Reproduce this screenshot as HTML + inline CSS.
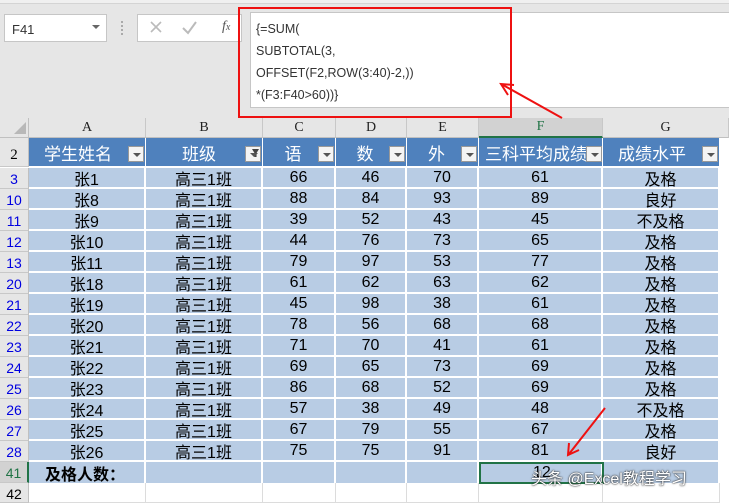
<!DOCTYPE html>
<html><head><meta charset="utf-8"><style>
*{margin:0;padding:0;box-sizing:border-box}
body{width:729px;height:503px;overflow:hidden;background:#fff;position:relative;font-family:"Liberation Sans","Noto Sans CJK SC",sans-serif}
.a{position:absolute}
.c{position:absolute;display:flex;align-items:center;justify-content:center;font-size:16px;color:#000;font-family:"Liberation Sans","Noto Sans CJK SC",sans-serif}
.rh{position:absolute;left:0;width:29px;background:#e6e6e6;border-bottom:1px solid #c8c8c8;border-right:1px solid #c0c0c0;color:#0000e0;font-size:14px;font-family:"Liberation Sans",sans-serif;display:flex;align-items:center;justify-content:center;padding-top:2px}
.ch{position:absolute;top:118px;height:20px;background:#e6e6e6;border-right:1px solid #c8c8c8;border-bottom:1px solid #c0c0c0;font-family:"Liberation Serif",serif;font-size:14px;display:flex;align-items:center;justify-content:center;color:#222}
.hd{position:absolute;top:138px;height:28px;background:#4f81bd;color:#fff;font-size:17px;font-family:"Liberation Sans","Noto Sans CJK SC",sans-serif;display:flex;align-items:center;justify-content:center;border-right:1px solid #fff}
.dd{position:absolute;width:16px;height:16px;background:#f4f4f4;border:1px solid #999;top:146px}
.dd:after{content:"";position:absolute;left:4px;top:6px;border-left:4px solid transparent;border-right:4px solid transparent;border-top:4px solid #555}
</style></head><body>
<div class="a" style="left:0;top:0;width:729px;height:118px;background:#e6e6e6"></div>
<div class="a" style="left:0;top:0;width:729px;height:4px;background:#f0f0f0;border-bottom:1px solid #d4d4d4"></div>
<div class="a" style="left:4px;top:14px;width:103px;height:28px;background:#fff;border:1px solid #c6c6c6;font-size:13px;color:#333;padding:7px 0 0 7px">F41</div>
<div class="a" style="left:92px;top:25px;border-left:4px solid transparent;border-right:4px solid transparent;border-top:4px solid #666"></div>
<div class="a" style="left:121px;top:21px;width:2px;height:14px;border-left:2px dotted #aaa"></div>
<div class="a" style="left:137px;top:14px;width:105px;height:28px;background:#fff;border:1px solid #c6c6c6"></div>
<svg class="a" style="left:137px;top:14px" width="105" height="28"><path d="M14 8 L24 18 M24 8 L14 18" stroke="#bbb" stroke-width="1.6"/><path d="M46 14 L51 19 L59 8" stroke="#bbb" stroke-width="2" fill="none"/></svg>
<div class="a" style="left:222px;top:19px;font-size:14px;color:#555;font-style:italic;font-family:'Liberation Serif',serif">f<span style="font-size:10px">x</span></div>
<div class="a" style="left:250px;top:12px;width:479px;height:96px;background:#fff;border:1px solid #c6c6c6;border-right:none"></div>
<div class="a" style="left:256px;top:18px;font-size:12.5px;line-height:22px;color:#333">{=SUM(<br>SUBTOTAL(3,<br>OFFSET(F2,ROW(3:40)-2,))<br>*(F3:F40&gt;60))}</div>
<div class="a" style="left:238px;top:7px;width:274px;height:111px;border:2px solid #ee1111"></div>
<div class="a" style="left:0;top:118px;width:29px;height:20px;background:#e6e6e6;border-right:1px solid #c0c0c0;border-bottom:1px solid #c0c0c0"></div>
<div class="a" style="left:14px;top:122px;border-left:12px solid transparent;border-bottom:12px solid #b8b8b8"></div>
<div class="ch" style="left:29px;width:117px">A</div>
<div class="ch" style="left:146px;width:117px">B</div>
<div class="ch" style="left:263px;width:73px">C</div>
<div class="ch" style="left:336px;width:71px">D</div>
<div class="ch" style="left:407px;width:72px">E</div>
<div class="ch" style="left:479px;width:124px;background:#d2d2d2;border-bottom:2px solid #217346;color:#217346">F</div>
<div class="ch" style="left:603px;width:126px">G</div>
<div class="rh" style="top:138px;height:29px;color:#000;align-items:flex-end;padding-bottom:2px;font-size:15px;font-family:'Liberation Serif',serif">2</div>
<div class="hd" style="left:29px;width:117px;padding-right:18px">学生姓名</div>
<div class="hd" style="left:146px;width:117px;padding-right:10px">班级</div>
<div class="hd" style="left:263px;width:73px;padding-right:12px">语</div>
<div class="hd" style="left:336px;width:71px;padding-right:12px">数</div>
<div class="hd" style="left:407px;width:72px;padding-right:12px">外</div>
<div class="hd" style="left:479px;width:124px;justify-content:flex-start;padding-left:6px;overflow:hidden;white-space:nowrap">三科平均成绩</div>
<div class="hd" style="left:603px;width:117px;padding-right:18px">成绩水平</div>
<div class="dd" style="left:128px"></div>
<div class="dd" style="left:245px"><span style="position:absolute;left:6px;top:2px;width:7px;height:8px;background:#444;clip-path:polygon(0 0,100% 0,65% 50%,65% 100%,35% 100%,35% 50%)"></span></div>
<div class="dd" style="left:318px"></div>
<div class="dd" style="left:389px"></div>
<div class="dd" style="left:461px"></div>
<div class="dd" style="left:586px"></div>
<div class="dd" style="left:702px"></div>
<div id="rows"></div>
<script>
var d=[[3,"张1",66,46,70,61,"及格"],[10,"张8",88,84,93,89,"良好"],[11,"张9",39,52,43,45,"不及格"],[12,"张10",44,76,73,65,"及格"],[13,"张11",79,97,53,77,"及格"],[20,"张18",61,62,63,62,"及格"],[21,"张19",45,98,38,61,"及格"],[22,"张20",78,56,68,68,"及格"],[23,"张21",71,70,41,61,"及格"],[24,"张22",69,65,73,69,"及格"],[25,"张23",86,68,52,69,"及格"],[26,"张24",57,38,49,48,"不及格"],[27,"张25",67,79,55,67,"及格"],[28,"张26",75,75,91,81,"良好"]];
var L=[29,146,263,336,407,479,603,720],h="";
d.forEach(function(r,i){var t=168+i*21;
h+='<div class="rh" style="top:'+t+'px;height:21px">'+r[0]+'</div>';
h+='<div class="a" style="left:29px;top:'+t+'px;width:691px;height:19px;background:#b8cce4"></div>';
var v=[r[1],"高三1班",r[2],r[3],r[4],r[5],r[6]];
for(var j=0;j<7;j++)h+='<div class="c" style="left:'+L[j]+'px;top:'+t+'px;width:'+(L[j+1]-L[j])+'px;height:20px;border-right:2px solid #fff">'+v[j]+'</div>';});
var t=462;
h+='<div class="rh" style="top:'+t+'px;height:21px;color:#217346;background:#d2d2d2;border-right:2px solid #217346">41</div>';
h+='<div class="a" style="left:29px;top:'+t+'px;width:691px;height:21px;background:#b8cce4"></div>';
for(var j=0;j<7;j++)h+='<div class="a" style="left:'+L[j]+'px;top:'+t+'px;width:'+(L[j+1]-L[j])+'px;height:21px;border-right:2px solid #fff"></div>';
h+='<div class="c" style="left:45px;top:'+t+'px;height:21px;font-weight:bold;font-size:16px">及格人数：</div>';
h+='<div class="a" style="left:479px;top:'+(t)+'px;width:125px;height:22px;border:2px solid #217346"></div>';
h+='<div class="c" style="left:533px;top:'+t+'px;height:21px;font-size:16px">12</div>';
h+='<div class="rh" style="top:483px;height:20px;color:#000">42</div>';
for(var j=0;j<7;j++)h+='<div class="a" style="left:'+L[j]+'px;top:483px;width:'+(L[j+1]-L[j])+'px;height:20px;border-right:1px solid #dcdcdc;border-bottom:1px solid #dcdcdc"></div>';
document.getElementById("rows").innerHTML=h;
</script>
<div class="a" style="left:531px;top:465px;font-size:16px;color:#fff;text-shadow:0 0 2px #333,0 0 1px #000;white-space:nowrap">头条 @Excel教程学习</div>
<svg class="a" style="left:0;top:0" width="729" height="503">
<line x1="562" y1="118" x2="503" y2="85" stroke="#ee1111" stroke-width="2"/>
<polyline points="514,85 501,84 508,95" fill="none" stroke="#ee1111" stroke-width="2"/>
<line x1="605" y1="408" x2="569" y2="454" stroke="#ee1111" stroke-width="2"/>
<polyline points="569,443 568,455 579,450" fill="none" stroke="#ee1111" stroke-width="2"/>
</svg>
</body></html>
